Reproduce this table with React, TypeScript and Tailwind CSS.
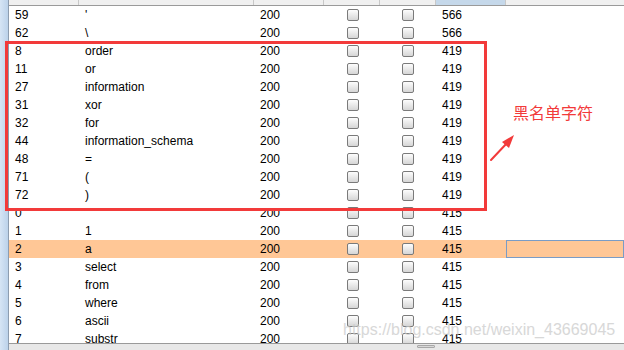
import React from "react";

const rows: [string, string, string, string][] = [
  ["59", "'", "200", "566"],
  ["62", "\\", "200", "566"],
  ["8", "order", "200", "419"],
  ["11", "or", "200", "419"],
  ["27", "information", "200", "419"],
  ["31", "xor", "200", "419"],
  ["32", "for", "200", "419"],
  ["44", "information_schema", "200", "419"],
  ["48", "=", "200", "419"],
  ["71", "(", "200", "419"],
  ["72", ")", "200", "419"],
  ["0", "", "200", "415"],
  ["1", "1", "200", "415"],
  ["2", "a", "200", "415"],
  ["3", "select", "200", "415"],
  ["4", "from", "200", "415"],
  ["5", "where", "200", "415"],
  ["6", "ascii", "200", "415"],
  ["7", "substr", "200", "415"],
];

function Box() {
  return (
    <div className="w-[12px] h-[12px] rounded-[2px] border border-[#7a7a7a] bg-gradient-to-b from-[#fdfdfd] to-[#d6d6d6]" />
  );
}

export default function App() {
  return (
    <div
      className="relative w-[624px] h-[350px] overflow-hidden bg-white flex text-[12px] text-black"
      style={{ fontFamily: "'Liberation Sans', Arial, sans-serif" }}
    >
      <div className="w-[9px] h-full bg-gradient-to-r from-[#d6e5f5] to-[#bcd2ea] border-r border-[#8d9db0]" />
      <div className="flex-1 flex flex-col">
        {/* header */}
        <div className="h-[6px] flex border-b border-[#9a9a9a] bg-[#f0f0f0]">
          <div className="w-[70px] border-r border-[#c8c8c8]" />
          <div className="w-[175px] border-r border-[#c8c8c8]" />
          <div className="w-[70px] border-r border-[#c8c8c8]" />
          <div className="w-[56px] border-r border-[#c8c8c8]" />
          <div className="w-[56px] border-r border-[#c8c8c8]" />
          <div className="w-[70px] border-r border-[#c8c8c8] bg-[#c5d8ea]" />
          <div className="flex-1" />
        </div>
        {/* body */}
        <div className="h-[337px] overflow-hidden">
          {rows.map((r, i) => {
            const sel = r[0] === "2";
            return (
              <div
                key={i}
                className={`h-[18px] flex items-center ${sel ? "bg-[#ffc796]" : ""}`}
              >
                <div className="w-[70px] pl-[6px] leading-[18px]">{r[0]}</div>
                <div className="w-[175px] pl-[6px] leading-[18px]">{r[1]}</div>
                <div className="w-[70px] pl-[6px] leading-[18px]">{r[2]}</div>
                <div className="w-[56px] flex justify-center pl-[2px]">
                  <Box />
                </div>
                <div className="w-[56px] flex justify-center">
                  <Box />
                </div>
                <div className="w-[70px] pl-[6px] leading-[18px]">{r[3]}</div>
                <div
                  className={`flex-1 h-full ${sel ? "border border-[#7a9cc6]" : ""}`}
                />
              </div>
            );
          })}
        </div>
        {/* horizontal scrollbar */}
        <div className="flex-1 border-t border-[#9a9a9a] bg-[#e8e8e8] relative">
          <div className="absolute left-[408px] top-[1px] w-[18px] h-[3px] rounded-[1px] border border-[#a8a8a8] bg-[#d8d8d8]" />
        </div>
      </div>

      {/* red annotation box */}
      <div className="absolute left-[5px] top-[41px] w-[482px] h-[170px] border-[3px] border-[#f23a3a]" />
      <div
        className="absolute left-[513px] top-[100px] text-[16px] text-[#f23a3a] tracking-[0px]"
        style={{ fontFamily: "'Noto Sans CJK SC', sans-serif" }}
      >
        黑名单字符
      </div>
      <svg className="absolute left-[488px] top-[130px]" width="30" height="34" viewBox="0 0 30 34">
        <line x1="3" y1="30" x2="20" y2="12" stroke="#f23a3a" strokeWidth="2" strokeLinecap="round" />
        <polygon points="26,5 14,12 21,18" fill="#f23a3a" />
      </svg>

      {/* watermark */}
      <div className="absolute left-[343px] top-[318px] text-[16px] text-[#c8c8c8] opacity-70 pointer-events-none whitespace-nowrap">
        https://blog.csdn.net/weixin_43669045
      </div>
    </div>
  );
}
